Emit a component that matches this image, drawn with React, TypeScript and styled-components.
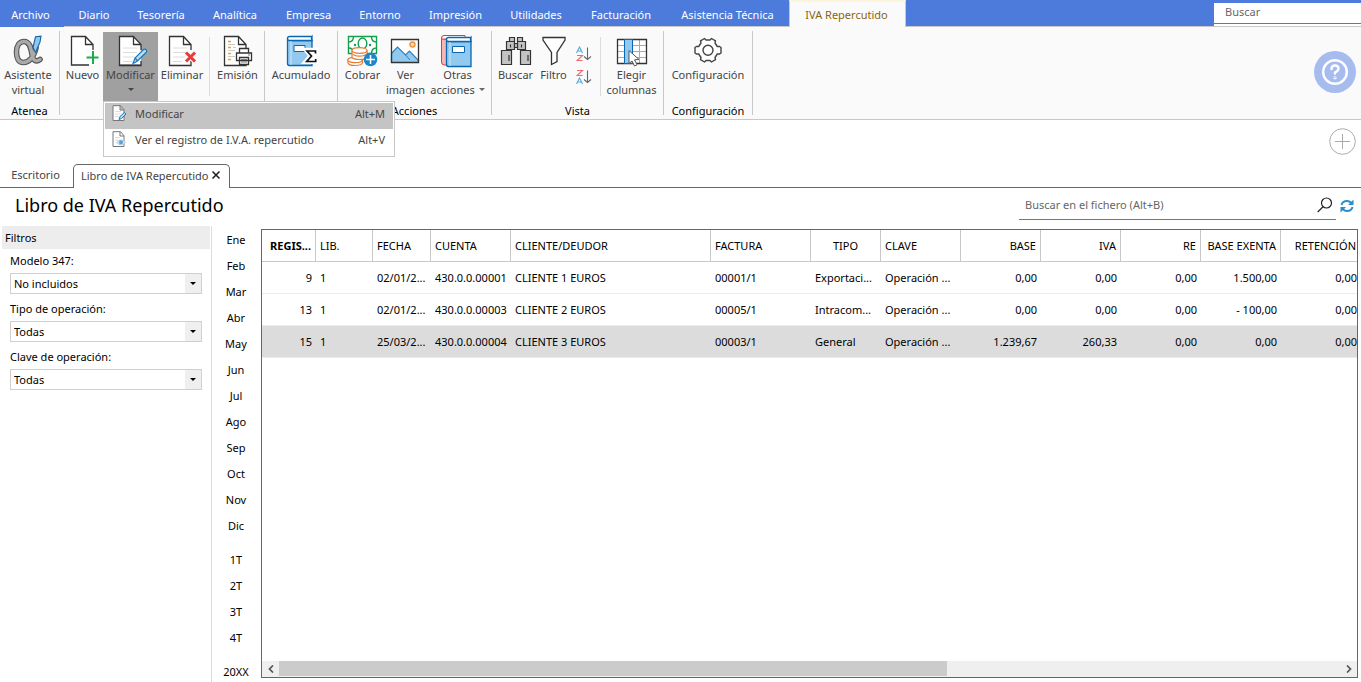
import React from "react";
import styled, { createGlobalStyle } from "styled-components";

const GlobalStyle = createGlobalStyle`
  *, *::before, *::after { box-sizing: border-box; }
  body { margin: 0; background: #fff; }
  body, button, input, select, table {
    font-family: "Noto Sans", "Segoe UI", sans-serif;
    font-size: 11px;
    line-height: 15px;
    color: #000;
  }
  button { border: 0; padding: 0; background: none; }
`;

const Page = styled.div`
  min-height: 100vh;
  display: flex;
  flex-direction: column;
  overflow: hidden;
`;

/* ---------- Top menu ---------- */

const MenuBar = styled.nav`
  display: flex;
  height: 27px;
  background: #4d7bdb;
  border-bottom: 1px solid #c8c8c8;
`;

const MenuTab = styled.button<{ $width: number }>`
  flex: none;
  width: ${(p) => p.$width}px;
  padding-top: 2px;
  color: #fff;
  white-space: nowrap;
`;

const FileTab = styled(MenuTab)`
  height: 27px;
  padding: 1px 3px 0 0;
  background: #4d7bdb;
`;

const ActiveMenuTab = styled(MenuTab)`
  height: 27px;
  padding: 0 2px 1px 0;
  color: #8a6510;
  background: #fafafa;
  border: 1px solid #c8c8c8;
  border-top: 2px solid #fdf6dc;
  border-bottom: 0;
`;

const GlobalSearch = styled.label`
  display: block;
  width: 147px;
  height: 23px;
  margin: 3px 0 0 auto;
  background: #fff;
`;

const GlobalSearchInput = styled.input`
  display: block;
  width: 100%;
  height: 21px;
  padding: 0 11px 3px;
  border: 0;
  border-bottom: 1px solid #777;
  background: #fff;
  &::placeholder { color: #666; opacity: 1; }
`;

/* ---------- Ribbon ---------- */

const Ribbon = styled.section`
  display: flex;
  height: 93px;
  background: #fafafa;
  border-bottom: 1px solid #c8c8c8;
`;

const Group = styled.div<{ $width: number }>`
  flex: none;
  display: flex;
  flex-direction: column;
  width: ${(p) => p.$width}px;
  margin: 4px 0;
  padding-top: 1px;
  border-right: 1px solid #c8c8c8;
`;

const Tools = styled.div<{ $start?: boolean }>`
  display: flex;
  justify-content: ${(p) => (p.$start ? "flex-start" : "center")};
  height: 69px;
`;

const GroupLabel = styled.div`
  margin-top: 2px;
  text-align: center;
`;

const Tool = styled.button<{ $width: number; $pressed?: boolean }>`
  flex: none;
  display: flex;
  flex-direction: column;
  align-items: center;
  width: ${(p) => p.$width}px;
  height: 69px;
  padding-top: 3px;
  color: #444;
  white-space: nowrap;
  background: ${(p) => (p.$pressed ? "#a0a0a0" : "transparent")};
`;

const ToolIcon = styled.svg`
  display: block;
  flex: none;
  width: 32px;
  height: 33px;
  margin-bottom: -1px;
  overflow: visible;
`;

const ToolText = styled.span`
  display: flex;
  align-items: center;
  gap: 4px;
  height: 15px;
`;

const ToolDivider = styled.div`
  width: 1px;
  height: 59px;
  margin: 5px 3px 0;
  background: #dcdcdc;
`;

const SortTools = styled.div`
  display: flex;
  flex-direction: column;
  gap: 7px;
  width: 25px;
  padding: 14px 0 0 4px;
`;

const SortButton = styled.button`
  display: block;
  width: 16px;
  height: 16px;
`;

const Chevron = styled.svg`
  display: block;
  width: 6px;
  height: 3px;
`;

const MenuAnchor = styled.div`
  position: relative;
  display: flex;
`;

const Popup = styled.div`
  position: absolute;
  z-index: 5;
  top: 100%;
  left: 0;
  width: 292px;
  padding: 1px;
  background: #fff;
  border: 1px solid #c8c8c8;
`;

const PopupItem = styled.button<{ $active?: boolean }>`
  display: flex;
  align-items: center;
  gap: 8px;
  width: 100%;
  height: 26px;
  padding: 0 8px 5px 6px;
  color: #444;
  text-align: left;
  background: ${(p) => (p.$active ? "#c4c4c4" : "transparent")};
`;

const PopupIcon = styled.svg`
  flex: none;
  width: 16px;
  height: 17px;
`;

const Shortcut = styled.span`
  margin-left: auto;
`;

const HelpButton = styled.button`
  width: 42px;
  height: 42px;
  margin: 24px 5px 0 auto;
  border-radius: 50%;
  background: #a6bcee;
`;

/* ---------- Document tabs ---------- */

const TabStrip = styled.div`
  display: flex;
  align-items: flex-end;
  height: 68px;
  border-bottom: 1px solid #666;
`;

const DocTab = styled.button`
  width: 73px;
  height: 24px;
  padding: 0 2px 2px 0;
  color: #444;
`;

const ActiveDocTab = styled.div`
  display: flex;
  align-items: center;
  gap: 3px;
  width: 157px;
  height: 24px;
  margin-bottom: -1px;
  padding: 0 0 3px 7px;
  background: #fff;
  border: 1px solid #666;
  border-bottom: 0;
  border-radius: 5px 5px 0 0;
`;

const TabName = styled.button`
  color: #444;
  white-space: nowrap;
`;

const CloseButton = styled.button`
  width: 10px;
  height: 10px;
  line-height: 0;
`;

const AddButton = styled.button`
  align-self: flex-start;
  width: 27px;
  height: 27px;
  margin: 8px 5px 0 auto;
`;

/* ---------- Heading ---------- */

const Heading = styled.header`
  display: flex;
  height: 38px;
`;

const Title = styled.h1`
  margin: 3px 0 0 15px;
  font-size: 18px;
  line-height: 28px;
  font-weight: 400;
`;

const FileSearch = styled.label`
  display: flex;
  align-items: center;
  width: 317px;
  height: 28px;
  margin: 4px 4px 0 auto;
  padding: 0 3px 2px 6px;
  border-bottom: 1px solid #777;
`;

const FileSearchInput = styled.input`
  flex: 1;
  min-width: 0;
  padding: 0;
  border: 0;
  outline: 0;
  background: transparent;
  &::placeholder { color: #666; opacity: 1; }
`;

const RefreshButton = styled.button`
  width: 14px;
  height: 14px;
  margin: 11px 7px 0 0;
  line-height: 0;
`;

/* ---------- Body ---------- */

const Body = styled.main`
  flex: 1;
  display: flex;
  min-height: 456px;
`;

const Filters = styled.aside`
  flex: none;
  width: 212px;
  padding: 0 1px 0 2px;
  border-right: 1px solid #dcdcdc;
`;

const FiltersTitle = styled.h2`
  margin: 0 0 4px;
  padding: 4px 3px;
  font-size: 11px;
  line-height: 15px;
  font-weight: 400;
  background: #ededed;
`;

const Field = styled.label`
  display: block;
  height: 48px;
  padding-left: 8px;
`;

const SelectBox = styled.span`
  position: relative;
  display: block;
  width: 192px;
  height: 21px;
  margin-top: 5px;
  border: 1px solid #d0d0d0;
`;

const Select = styled.select`
  appearance: none;
  display: block;
  width: 100%;
  height: 19px;
  padding: 0 20px 0 3px;
  border: 0;
  background: #fff;
`;

const SelectArrow = styled.span`
  position: absolute;
  top: 0;
  right: 0;
  bottom: 0;
  display: flex;
  align-items: center;
  justify-content: center;
  width: 16px;
  background: #efefef;
  pointer-events: none;
`;

const Periods = styled.nav`
  flex: none;
  display: flex;
  flex-direction: column;
  gap: 8px;
  width: 48px;
  margin: 0 1px -4px 0;
`;

const PeriodBlock = styled.div`
  display: flex;
  flex-direction: column;
`;

const Period = styled.button`
  height: 26px;
`;

const GridFrame = styled.section`
  flex: 1;
  min-width: 0;
  display: flex;
  flex-direction: column;
  margin: 3px 3px 4px 0;
  border: 1px solid #666;
`;

const GridView = styled.div`
  flex: 1;
  overflow: hidden;
`;

const Table = styled.table`
  width: 1099px;
  table-layout: fixed;
  border-collapse: separate;
  border-spacing: 0;
`;

type Align = "left" | "right" | "center";

const HeadCell = styled.th<{ $align: Align; $strong?: boolean }>`
  height: 32px;
  padding: 0 4px 1px;
  overflow: hidden;
  white-space: nowrap;
  text-align: ${(p) => p.$align};
  font-weight: ${(p) => (p.$strong ? 700 : 400)};
  border-right: 1px solid #c8c8c8;
  border-bottom: 1px solid #c8c8c8;
`;

const Row = styled.tr<{ $selected?: boolean }>`
  background: ${(p) => (p.$selected ? "#dcdcdc" : "#fff")};
`;

const Cell = styled.td<{ $align: Align }>`
  height: 32px;
  padding: 0 4px;
  overflow: hidden;
  white-space: nowrap;
  text-align: ${(p) => p.$align};
  border-bottom: 1px solid #ececec;
`;

const ScrollBar = styled.div`
  display: flex;
  height: 16px;
  background: #efefef;
`;

const ScrollArrow = styled.button`
  flex: none;
  display: flex;
  align-items: center;
  justify-content: center;
  width: 17px;
`;

const ScrollTrack = styled.div`
  flex: 1;
`;

const ScrollThumb = styled.div`
  width: 63%;
  height: 15px;
  background: #cbcbcb;
`;

/* ---------- Drawings ---------- */

const INK = "#333";

const Down = ({ fill = "#444" }: { fill?: string }) => (
  <Chevron viewBox="0 0 6 3"><path d="M0 0h6L3 3z" fill={fill} /></Chevron>
);

const Sheet = ({ lines }: { lines?: boolean }) => (
  <>
    <path d="M2 1h15l7 8v20H2z" fill="#fff" />
    {lines && <path d="M6 13h14M6 17.500h14M6 22h12M6 26.500h9" stroke="#dcdcdc" />}
    <path d="M24 15V9.500L16.500 1.500h-14v29H24V26M16.500 1.500v8H24" fill="none" stroke={INK} strokeWidth="1.300" />
  </>
);

const Pencil = () => (
  <path d="M16 28.500l2-5.500 8.500-8.500q1.500-.8 2.600.2t.2 2.600L20.500 26zM18 23l2.500 3" fill="#b9dcf3" stroke="#1a78be" strokeWidth="1.200" />
);

const AlphaIcon = () => (
  <ToolIcon viewBox="0 0 32 33">
    {[["#555", 5.6], ["#aaa", 3.4]].map(([c, w]) => (
      <path key={c} d="M24 13C22 22 17 27.500 11.500 27.500 6.500 27.500 4.500 23 4.500 17 4.500 10.500 7.500 6.500 12 6.500c6 0 7 7 8 13 1 6 4 8 8 5" fill="none" stroke={c} strokeWidth={w} strokeLinecap="round" />
    ))}
    <path d="M23.500 1.800l5.500-.6-1 6-4.500 10.300-2.500-5z" fill="#8fc8ee" stroke="#16639f" strokeWidth="1.100" />
  </ToolIcon>
);

const NewIcon = () => (
  <ToolIcon viewBox="-2 0 32 33">
    <path d="M2 1h15l7 8v21H2z" fill="#fff" />
    <path d="M24 15V9.500L16.500 1.500h-14v28.500H20M16.500 1.500v8H24" fill="none" stroke={INK} strokeWidth="1.300" />
    <path d="M24 16v13M17.500 22.500h12" stroke="#1aab4b" strokeWidth="2" />
  </ToolIcon>
);

const EditIcon = () => (
  <ToolIcon viewBox="-2 0 32 33"><Sheet lines /><Pencil /></ToolIcon>
);

const DeleteIcon = () => (
  <ToolIcon viewBox="-1 0 32 33">
    <Sheet lines />
    <path d="M19 17.500l9 9M28 17.500l-9 9" stroke="#fafafa" strokeWidth="5" />
    <path d="M19 17.500l9 9M28 17.500l-9 9" stroke="#ee3a37" strokeWidth="3" />
  </ToolIcon>
);

const PrintIcon = () => (
  <ToolIcon viewBox="0 0 32 33">
    <Sheet />
    <path d="M6 6.500h3M6 12.500h3M6 18.500h3M6 24.500h3" stroke="#f0a02c" strokeWidth="1.400" />
    <path d="M6 9.500h7M6 15.500h7M6 21.500h7M11 12.500h3" stroke="#ccc" />
    <path d="M17.500 18v-4.500h9V18M14.500 25.500v-7.500h15v7.500zM17.500 22.500h9v7h-9z" fill="#fff" stroke={INK} strokeWidth="1.300" />
    <path d="M19 24.500h6M19 27h6M26 20h2" stroke="#777" />
  </ToolIcon>
);

const Book = ({ cover, edge }: { cover: string; edge: string }) => (
  <>
    <path d="M2.500 3.500v25q0 2 2 2H27V5.500H5q-2.500 0-2.500-2z" fill={cover} stroke={edge} strokeWidth="1.300" />
    <path d="M27 1.500H4.500q-2 0-2 2t2 2H27V1.500q-1.500 2 0 4" fill="#fff" stroke={edge} strokeWidth="1.300" />
    <path d="M6 6v24" stroke="#dff0fb" strokeWidth=".8" />
  </>
);

const TotalsIcon = () => (
  <ToolIcon viewBox="0 0 32 33">
    <Book cover="#92c9ef" edge="#0a67b2" />
    <path d="M9 10.500h11v6H9z" fill="#fff" stroke="#0a67b2" />
    <path d="M30.500 17.500v-2.200h-9l4.500 5.700-4.800 5.500h9.600V24" fill="#fff" stroke="#fff" strokeWidth="5" />
    <path d="M30.500 18.500v-2.500h-8.500l4.500 5-4.800 5.500h9V24" fill="none" stroke="#111" strokeWidth="1.700" />
  </ToolIcon>
);

const CashIcon = () => (
  <ToolIcon viewBox="0 0 32 33">
    <path d="M1.500 1.500h28v17h-28z" fill="#fff" stroke="#13a04b" strokeWidth="1.400" />
    <path d="M1.500 7q5 0 5-5.500M29.500 7q-5 0-5-5.500M29.500 13q-5 0-5 5.500M1.500 13q5 0 5 5" fill="none" stroke="#13a04b" strokeWidth="1.400" />
    <ellipse cx="15.500" cy="8.500" rx="4.300" ry="5.500" fill="none" stroke="#13a04b" strokeWidth="1.400" />
    <circle cx="8" cy="10" r="1.200" fill="#13a04b" /><circle cx="23" cy="10" r="1.200" fill="#13a04b" />
    <g fill="#fff" stroke="#e77b36" strokeWidth="1.200">
      <path d="M1 25v3q1 2.500 7 2.500t7.500-2.500v-3z" /><ellipse cx="8" cy="25" rx="7.200" ry="2.600" />
      <path d="M5 15.500v6.500q1 2.500 7.500 2.500t7.500-2.500v-6.500z" /><path d="M5 18.500q2 2.600 7.500 2.600t7.500-2.600" />
      <ellipse cx="12.500" cy="15.500" rx="7.500" ry="2.800" />
    </g>
    <circle cx="23.500" cy="24.500" r="6.800" fill="#1d86c9" />
    <path d="M23.500 20v9M19 24.500h9" stroke="#fff" strokeWidth="1.500" />
  </ToolIcon>
);

const ImageIcon = () => (
  <ToolIcon viewBox="1 0 32 33">
    <path d="M2.500 4.500h27v23h-27z" fill="#fff" />
    <path d="M2.500 18.500l6-6.500 8 8 4-4 9 9.500v2h-27z" fill="#92c9ef" stroke="#2e80b8" strokeWidth="1.200" />
    <path d="M16.500 20l4.500 5" stroke="#2e80b8" />
    <circle cx="23.500" cy="9.500" r="2.500" fill="#fbd9a5" stroke="#ec9544" strokeWidth="1.400" />
    <path d="M2.500 4.500h27v23h-27z" fill="none" stroke={INK} strokeWidth="1.300" />
  </ToolIcon>
);

const MoreIcon = () => (
  <ToolIcon viewBox="2 0 32 33">
    <path d="M1.500 2v25q0 3 3 3h21V4H4q-2.500-1-2.500-2z" fill="#f6b6b6" stroke="#e23a3a" />
    <path d="M25 .500H4q-3 0-2.500 3.500H25z" fill="#fff" stroke="#e23a3a" />
    <g transform="translate(4 1)"><Book cover="#92c9ef" edge="#0a67b2" /></g>
    <path d="M12.500 11.500h12v6h-12z" fill="#fff" stroke="#0a67b2" />
  </ToolIcon>
);

const BinocularsIcon = () => (
  <ToolIcon viewBox="0 0 32 33">
    <g fill="#c3c3c3" stroke={INK} strokeWidth="1.200">
      <path d="M9.500 2.500h5v4h-5zM17.500 2.500h5v4h-5zM6.500 6.500h8v8h-8zM17.500 6.500h8v8h-8zM1.500 15.500h10v14h-10zM20.500 15.500h10v14h-10z" />
      <path d="M14.500 8.500h3v4h-3zM10.500 9.500v3M21.500 9.500v3M9 20v6M28 20v6" />
    </g>
  </ToolIcon>
);

const FunnelIcon = () => (
  <ToolIcon viewBox="0 0 32 33">
    <path d="M5 2.500h22v2.500l-8 12.500v9l-5.500 3v-12L5 5z" fill="#fff" stroke={INK} strokeWidth="1.300" />
  </ToolIcon>
);

const SortIcon = ({ descending }: { descending?: boolean }) => {
  const a = "M0.500 7L3.500 1l3 6M1.500 5h4";
  const z = "M1 1.500h5.500L1 6.500h5.500";
  return (
    <svg width="16" height="16" viewBox="0 0 16 16" fill="none" strokeWidth="1.100">
      <g stroke={descending ? "#f0696c" : "#5aa9dd"}><path d={descending ? z : a} /></g>
      <g stroke={descending ? "#5aa9dd" : "#f0696c"} transform="translate(0 8)"><path d={descending ? a : z} /></g>
      <path d="M11.500 1.500v12M8 10.500l3.500 3 3.500-3" stroke="#666" />
    </svg>
  );
};

const ColumnsIcon = () => (
  <ToolIcon viewBox="0 0 32 33">
    <path d="M1.500 4.500h29v24h-29z" fill="#fff" />
    <path d="M1.500 10.500h29M1.500 16.500h29M1.500 22.500h29M23.500 4.500v24" stroke="#aaa" />
    <path d="M1.500 4.500h29v24h-29z" fill="none" stroke={INK} strokeWidth="1.300" />
    <path d="M8.500 4.500h8v24h-8z" fill="#92c9ef" stroke="#0a67b2" />
    <path d="M13 15.500v13l3-2.500 2.500 5 2.500-1.200-2.500-5 4.500-.3z" fill="#fff" stroke="#555" />
  </ToolIcon>
);

const GearIcon = () => (
  <ToolIcon viewBox="0 0 32 33">
    <path d="M12.500 3.500l1.500 1.500h4l1.500-1.500 4 2.300-.5 2.200 2.300 3.500h2.300l1.400 1v5.500l-1.400 1h-2.300L23 22.500l.5 2.200-4 2.300-1.500-1.500h-4L12.500 27l-4-2.300.5-2.200L6.700 19H4.400L3 18v-5.500l1.400-1h2.300L9 8l-.5-2.200z" fill="#fff" stroke="#444" strokeWidth="1.400" strokeLinejoin="round" />
    <circle cx="16" cy="15.300" r="5" fill="#fff" stroke="#444" strokeWidth="1.400" />
  </ToolIcon>
);

const SmallSheet = () => (
  <path d="M2 .700h7.500l3.500 4V15.500H2zM9 .700V5h4" fill="#fff" stroke="#777" />
);

/* ---------- Data ---------- */

const MENU: [string, number][] = [
  ["Diario", 60], ["Tesorería", 74], ["Analítica", 74], ["Empresa", 73], ["Entorno", 70],
  ["Impresión", 81], ["Utilidades", 80], ["Facturación", 90], ["Asistencia Técnica", 123],
];

const COLUMNS: { name: string; width: number; align: Align; head?: Align }[] = [
  { name: "REGIS...", width: 54, align: "right" },
  { name: "LIB.", width: 57, align: "left" },
  { name: "FECHA", width: 58, align: "left" },
  { name: "CUENTA", width: 80, align: "left" },
  { name: "CLIENTE/DEUDOR", width: 200, align: "left" },
  { name: "FACTURA", width: 100, align: "left" },
  { name: "TIPO", width: 70, align: "left", head: "center" },
  { name: "CLAVE", width: 80, align: "left" },
  { name: "BASE", width: 80, align: "right" },
  { name: "IVA", width: 80, align: "right" },
  { name: "RE", width: 80, align: "right" },
  { name: "BASE EXENTA", width: 80, align: "right" },
  { name: "RETENCIÓN", width: 80, align: "right" },
];

const ROWS = [
  ["9", "1", "02/01/2...", "430.0.0.00001", "CLIENTE 1 EUROS", "00001/1", "Exportaci...", "Operación ...", "0,00", "0,00", "0,00", "1.500,00", "0,00"],
  ["13", "1", "02/01/2...", "430.0.0.00003", "CLIENTE 2 EUROS", "00005/1", "Intracom...", "Operación ...", "0,00", "0,00", "0,00", "- 100,00", "0,00"],
  ["15", "1", "25/03/2...", "430.0.0.00004", "CLIENTE 3 EUROS", "00003/1", "General", "Operación ...", "1.239,67", "260,33", "0,00", "0,00", "0,00"],
];

const FILTERS = [
  ["Modelo 347:", "No incluidos"],
  ["Tipo de operación:", "Todas"],
  ["Clave de operación:", "Todas"],
];

const PERIODS = [
  ["Ene", "Feb", "Mar", "Abr", "May", "Jun", "Jul", "Ago", "Sep", "Oct", "Nov", "Dic"],
  ["1T", "2T", "3T", "4T"],
  ["20XX"],
];

export default function App() {
  return (
    <Page>
      <GlobalStyle />
      <MenuBar>
        <FileTab $width={64}>Archivo</FileTab>
        {MENU.map(([name, width]) => <MenuTab key={name} $width={width}>{name}</MenuTab>)}
        <ActiveMenuTab $width={117}>IVA Repercutido</ActiveMenuTab>
        <GlobalSearch><GlobalSearchInput placeholder="Buscar" aria-label="Buscar" /></GlobalSearch>
      </MenuBar>

      <Ribbon>
        <Group $width={60}>
          <Tools $start>
            <Tool $width={56}><AlphaIcon /><ToolText>Asistente</ToolText><ToolText>virtual</ToolText></Tool>
          </Tools>
          <GroupLabel>Atenea</GroupLabel>
        </Group>
        <Group $width={205}>
          <Tools>
            <Tool $width={41}><NewIcon /><ToolText>Nuevo</ToolText></Tool>
            <MenuAnchor>
              <Tool $width={55} $pressed><EditIcon /><ToolText>Modificar</ToolText><ToolText><Down /></ToolText></Tool>
              <Popup>
                <PopupItem $active>
                  <PopupIcon viewBox="0 0 16 17">
                    <SmallSheet />
                    <path d="M4 6.500h6M4 9h6M4 11.500h4" stroke="#ddd" />
                    <path d="M8 14.500l1-3 4.500-4 1.500 1.500-4.500 4.500z" fill="#b9dcf3" stroke="#1a78be" />
                  </PopupIcon>
                  <span>Modificar</span><Shortcut>Alt+M</Shortcut>
                </PopupItem>
                <PopupItem>
                  <PopupIcon viewBox="0 0 16 17">
                    <SmallSheet />
                    <path d="M4 6.500h5M4 9h4" stroke="#ddd" />
                    <path d="M5.500 11.500Q10 6.500 14.500 11.500 10 16 5.500 11.500z" fill="#d5e9f7" stroke="#a9cfe8" />
                    <circle cx="10" cy="11.300" r="2" fill="#5b9fce" />
                  </PopupIcon>
                  <span>Ver el registro de I.V.A. repercutido</span><Shortcut>Alt+V</Shortcut>
                </PopupItem>
              </Popup>
            </MenuAnchor>
            <Tool $width={48}><DeleteIcon /><ToolText>Eliminar</ToolText></Tool>
            <ToolDivider />
            <Tool $width={49}><PrintIcon /><ToolText>Emisión</ToolText></Tool>
          </Tools>
        </Group>
        <Group $width={73}>
          <Tools><Tool $width={68}><TotalsIcon /><ToolText>Acumulado</ToolText></Tool></Tools>
        </Group>
        <Group $width={154}>
          <Tools>
            <Tool $width={42}><CashIcon /><ToolText>Cobrar</ToolText></Tool>
            <Tool $width={44}><ImageIcon /><ToolText>Ver</ToolText><ToolText>imagen</ToolText></Tool>
            <Tool $width={60}><MoreIcon /><ToolText>Otras</ToolText><ToolText>acciones<Down fill="#666" /></ToolText></Tool>
          </Tools>
          <GroupLabel>Acciones</GroupLabel>
        </Group>
        <Group $width={172}>
          <Tools>
            <Tool $width={40}><BinocularsIcon /><ToolText>Buscar</ToolText></Tool>
            <Tool $width={36}><FunnelIcon /><ToolText>Filtro</ToolText></Tool>
            <SortTools>
              <SortButton aria-label="Orden ascendente"><SortIcon /></SortButton>
              <SortButton aria-label="Orden descendente"><SortIcon descending /></SortButton>
            </SortTools>
            <ToolDivider />
            <Tool $width={56}><ColumnsIcon /><ToolText>Elegir</ToolText><ToolText>columnas</ToolText></Tool>
          </Tools>
          <GroupLabel>Vista</GroupLabel>
        </Group>
        <Group $width={89}>
          <Tools><Tool $width={80}><GearIcon /><ToolText>Configuración</ToolText></Tool></Tools>
          <GroupLabel>Configuración</GroupLabel>
        </Group>
        <HelpButton aria-label="Ayuda">
          <svg width="42" height="42" viewBox="0 0 42 42" fill="none" stroke="#fff" strokeWidth="2.400" strokeLinecap="round">
            <circle cx="21" cy="21" r="11.800" />
            <path d="M17.500 18q0-3.500 3.500-3.500t3.500 3.300q0 2-3.500 3.700v1" />
            <circle cx="21" cy="26.800" r=".4" />
          </svg>
        </HelpButton>
      </Ribbon>

      <TabStrip>
        <DocTab>Escritorio</DocTab>
        <ActiveDocTab>
          <TabName>Libro de IVA Repercutido</TabName>
          <CloseButton aria-label="Cerrar">
            <svg width="10" height="10" viewBox="0 0 10 10"><path d="M1.500 1.500l7 7M8.500 1.500l-7 7" stroke="#222" strokeWidth="1.600" /></svg>
          </CloseButton>
        </ActiveDocTab>
        <AddButton aria-label="Añadir">
          <svg width="27" height="27" viewBox="0 0 27 27" fill="none" stroke="#aaa">
            <circle cx="13.500" cy="13.500" r="12.800" /><path d="M13.500 6v15M6 13.500h15" />
          </svg>
        </AddButton>
      </TabStrip>

      <Heading>
        <Title>Libro de IVA Repercutido</Title>
        <FileSearch>
          <FileSearchInput placeholder="Buscar en el fichero (Alt+B)" aria-label="Buscar en el fichero" />
          <svg width="16" height="16" viewBox="0 0 16 16" fill="none" stroke="#222" strokeWidth="1.200">
            <circle cx="9.500" cy="6" r="5" /><path d="M6 9.800L.700 15" />
          </svg>
        </FileSearch>
        <RefreshButton aria-label="Actualizar">
          <svg width="14" height="14" viewBox="0 0 14 14" fill="none" stroke="#2b8ccc" strokeWidth="2">
            <path d="M1.500 6Q2.500 2 7 2q3 0 4.500 2.500M12.500 8q-1 4-5.500 4-3 0-4.500-2.500" />
            <path d="M13.500 .500V6H8zM.500 13.500V8H6z" fill="#2b8ccc" stroke="none" />
          </svg>
        </RefreshButton>
      </Heading>

      <Body>
        <Filters>
          <FiltersTitle>Filtros</FiltersTitle>
          {FILTERS.map(([label, value]) => (
            <Field key={label}>
              {label}
              <SelectBox>
                <Select><option>{value}</option></Select>
                <SelectArrow><Down fill="#000" /></SelectArrow>
              </SelectBox>
            </Field>
          ))}
        </Filters>

        <Periods>
          {PERIODS.map((block) => (
            <PeriodBlock key={block[0]}>
              {block.map((name) => <Period key={name}>{name}</Period>)}
            </PeriodBlock>
          ))}
        </Periods>

        <GridFrame>
          <GridView>
            <Table>
              <colgroup>
                {COLUMNS.map((c) => <col key={c.name} width={c.width} />)}
              </colgroup>
              <thead>
                <tr>
                  {COLUMNS.map((c, i) => (
                    <HeadCell key={c.name} $align={c.head ?? c.align} $strong={i === 0}>{c.name}</HeadCell>
                  ))}
                </tr>
              </thead>
              <tbody>
                {ROWS.map((row, r) => (
                  <Row key={row[0]} $selected={r === 2}>
                    {row.map((value, i) => <Cell key={COLUMNS[i].name} $align={COLUMNS[i].align}>{value}</Cell>)}
                  </Row>
                ))}
              </tbody>
            </Table>
          </GridView>
          <ScrollBar>
            <ScrollArrow aria-label="Desplazar a la izquierda">
              <svg width="6" height="8" viewBox="0 0 6 8"><path d="M5 .500L1.500 4 5 7.500" fill="none" stroke="#555" strokeWidth="1.700" /></svg>
            </ScrollArrow>
            <ScrollTrack><ScrollThumb /></ScrollTrack>
            <ScrollArrow aria-label="Desplazar a la derecha">
              <svg width="6" height="8" viewBox="0 0 6 8"><path d="M1 .500L4.500 4 1 7.500" fill="none" stroke="#555" strokeWidth="1.700" /></svg>
            </ScrollArrow>
          </ScrollBar>
        </GridFrame>
      </Body>
    </Page>
  );
}
